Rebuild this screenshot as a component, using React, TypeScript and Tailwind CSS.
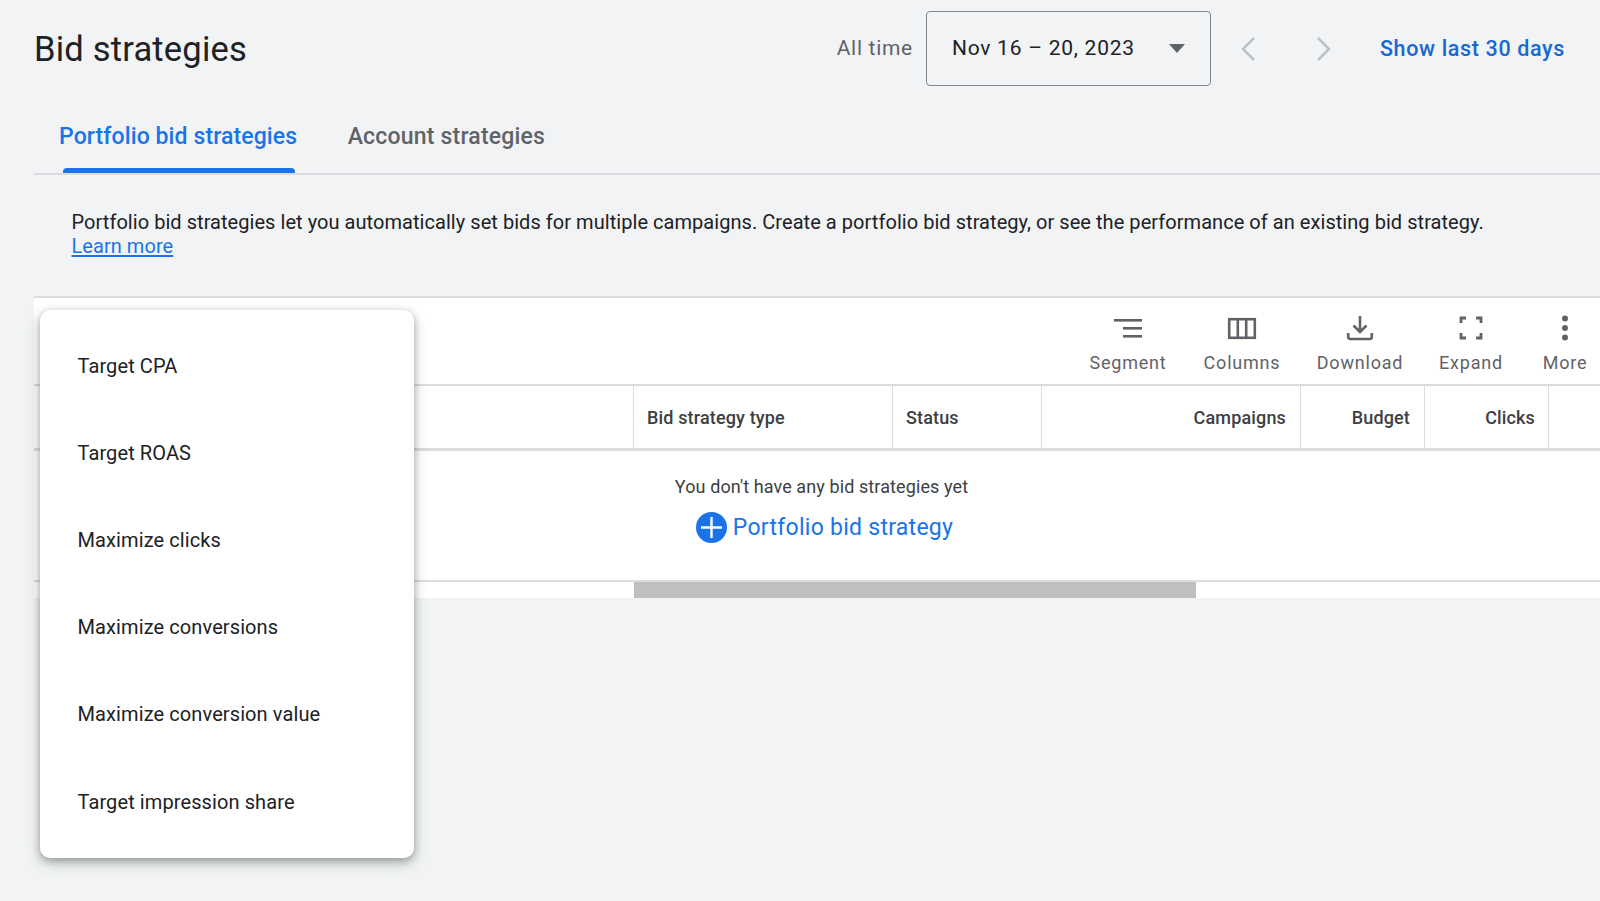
const menuItems = [
  "Target CPA",
  "Target ROAS",
  "Maximize clicks",
  "Maximize conversions",
  "Maximize conversion value",
  "Target impression share",
];

function SegmentIcon() {
  return (
    <svg width="30" height="24" viewBox="0 0 30 24" fill="#5f6368">
      <rect x="1" y="3" width="28" height="2.6" />
      <rect x="10" y="11" width="19" height="2.6" />
      <rect x="10" y="19" width="19" height="2.6" />
    </svg>
  );
}

function ColumnsIcon() {
  return (
    <svg width="30" height="24" viewBox="0 0 30 24" fill="none" stroke="#5f6368" strokeWidth="2.6">
      <rect x="2.2" y="3.2" width="25.6" height="18.6" />
      <path d="M10.8 3v19M19.2 3v19" />
    </svg>
  );
}

function DownloadIcon() {
  return (
    <svg width="30" height="26" viewBox="0 0 30 26" fill="none" stroke="#5f6368" strokeWidth="2.6">
      <path d="M15 1v15M8.5 10.5 15 17l6.5-6.500" />
      <path d="M3.200 18v4a2 2 0 0 0 2 2h19.600a2 2 0 0 0 2-2v-4" />
    </svg>
  );
}

function ExpandIcon() {
  return (
    <svg width="26" height="24" viewBox="0 0 26 24" fill="none" stroke="#5f6368" strokeWidth="2.8">
      <path d="M8 2H3v5M18 2h5v5M3 17v5h5M23 17v5h-5" />
    </svg>
  );
}

function MoreIcon() {
  return (
    <svg width="12" height="26" viewBox="0 0 12 26" fill="#5f6368">
      <circle cx="6" cy="3.500" r="3" />
      <circle cx="6" cy="13" r="3" />
      <circle cx="6" cy="22.500" r="3" />
    </svg>
  );
}

const tools = [
  { label: "Segment", icon: <SegmentIcon />, width: "w-[76px]" },
  { label: "Columns", icon: <ColumnsIcon />, width: "w-[76px]" },
  { label: "Download", icon: <DownloadIcon />, width: "w-[84px]" },
  { label: "Expand", icon: <ExpandIcon />, width: "w-[62px]" },
  { label: "More", icon: <MoreIcon />, width: "ml-[3px] w-[44px]" },
];

export default function App() {
  return (
    <div className="relative h-[901px] w-[1600px] overflow-hidden bg-[#f1f3f4] pl-[34px] font-[Roboto,sans-serif] text-[#202124]">
      <header className="flex h-[75px] mt-[11px] items-center">
        <h1 className="pt-[1px] text-[34.5px] leading-[40px] font-normal tracking-[0.2px]">Bid strategies</h1>
        <div className="ml-auto flex items-center pr-[35px]">
          <span className="mr-[13px] text-[21px] tracking-[0.7px] text-[#5f6368]">All time</span>
          <button className="flex h-[75px] w-[285px] items-center justify-between rounded-[4px] border-[1.5px] border-[#80868b] pr-[25px] pl-[25px] text-[21px] tracking-[0.75px]">
            <span>Nov 16 – 20, 2023</span>
            <svg width="16" height="9" viewBox="0 0 16 9" fill="#5f6368">
              <path d="M0 0h16L8 9z" />
            </svg>
          </button>
          <svg className="ml-[29px]" width="16" height="26" viewBox="0 0 16 26" fill="none" stroke="#bdc1c6" strokeWidth="2.500">
            <path d="M14 2 3 13l11 11" />
          </svg>
          <svg className="ml-[60px]" width="16" height="26" viewBox="0 0 16 26" fill="none" stroke="#bdc1c6" strokeWidth="2.500">
            <path d="m2 2 11 11L2 24" />
          </svg>
          <a className="ml-[48px] pt-[1px] text-[21.500px] font-medium tracking-[0.65px] text-[#1967d2]">Show last 30 days</a>
        </div>
      </header>

      <nav className="flex h-[89px] border-b-2 border-[#dadce0] pl-[25px]">
        <div className="relative pt-[35.500px] text-[23px] leading-[30px] font-medium tracking-[0.1px] text-[#1a73e8]">
          Portfolio bid strategies
          <span className="absolute right-[2px] bottom-0 left-[4px] h-[5px] rounded-t-[4px] bg-[#1a73e8]" />
        </div>
        <div className="ml-[50.500px] pt-[35.500px] text-[23px] leading-[30px] font-medium tracking-[0.2px] text-[#5f6368]">Account strategies</div>
      </nav>

      <p className="pt-[35px] pl-[37.500px] text-[20px] leading-[24px] tracking-[0.05px]">
        Portfolio bid strategies let you automatically set bids for multiple campaigns. Create a portfolio bid strategy, or see the performance of an existing bid strategy.
        <br />
        <a className="text-[#1a73e8] underline underline-offset-2">Learn more</a>
      </p>

      <section className="mt-[38px] border-t-2 border-[#dadce0] bg-white">
        <div className="flex h-[88px] items-start justify-end gap-[38px] border-b-2 border-[#dadce0] pt-[16px] pr-[13px]">
          {tools.map((t) => (
            <div key={t.label} className={`flex flex-col items-center ${t.width}`}>
              <div className="flex h-[28px] items-center">{t.icon}</div>
              <span className="mt-[9px] text-[18px] leading-[24px] font-normal tracking-[0.8px] whitespace-nowrap text-[#5f6368]">{t.label}</span>
            </div>
          ))}
        </div>

        <div className="flex h-[65px] border-b-[3px] border-[#dadce0] text-[18px] font-medium tracking-[0.15px] text-[#3c4043]">
          <div className="w-[599px]" />
          <div className="flex w-[259px] items-center border-l-[1.5px] border-[#dadce0] pl-[13px]">Bid strategy type</div>
          <div className="flex w-[149px] items-center border-l-[1.5px] border-[#dadce0] pl-[13px]">Status</div>
          <div className="flex w-[259px] items-center justify-end border-l-[1.5px] border-[#dadce0] pr-[14px]">Campaigns</div>
          <div className="flex w-[124px] items-center justify-end border-l-[1.5px] border-[#dadce0] pr-[14px]">Budget</div>
          <div className="flex w-[124px] items-center justify-end border-l-[1.5px] border-[#dadce0] pr-[13px]">Clicks</div>
          <div className="flex-1 border-l-[1.5px] border-[#dadce0]" />
        </div>

        <div className="flex h-[131px] border-b-2 border-[#dadce0] pl-[600px]">
          <div className="flex w-[375px] flex-col items-center pt-[24px]">
            <span className="text-[18px] leading-[24px] tracking-[0.1px] whitespace-nowrap text-[#3c4043]">You don't have any bid strategies yet</span>
            <div className="mt-[13px] ml-[6px] flex items-center gap-[6px] whitespace-nowrap">
              <svg width="31" height="31" viewBox="0 0 31 31">
                <circle cx="15.500" cy="15.500" r="15.500" fill="#1a73e8" />
                <path d="M15.500 5v21M5 15.500h21" stroke="#fff" strokeWidth="2.400" />
              </svg>
              <span className="text-[23px] leading-[30px] tracking-[0.27px] text-[#1a73e8]">Portfolio bid strategy</span>
            </div>
          </div>
        </div>

        <div className="flex h-[16px] pl-[600px]">
          <div className="h-full w-[562px] bg-[#bdbfc1]" />
        </div>
      </section>

      <div className="absolute top-[310px] left-[40px] flex h-[548px] w-[374px] flex-col rounded-[10px] bg-white pt-[12px] shadow-[0_3px_8px_rgba(60,64,67,0.45),0_6px_16px_rgba(60,64,67,0.15)]">
        {menuItems.map((item) => (
          <div key={item} className="flex h-[87.200px] shrink-0 items-center pl-[37.500px] text-[20px] tracking-[0.1px]">
            {item}
          </div>
        ))}
      </div>
    </div>
  );
}
